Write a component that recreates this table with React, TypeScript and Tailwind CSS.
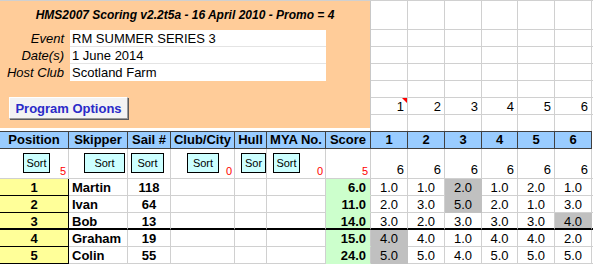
import { Fragment } from "react";

const cols =
  "grid grid-cols-[69px_59px_43px_64px_32px_59px_45px_37px_37px_37px_36px_37px_37px_1fr]";

const info = [
  ["Event", "RM SUMMER SERIES 3"],
  ["Date(s)", "1 June 2014"],
  ["Host Club", "Scotland Farm"],
];

const heads = ["Position", "Skipper", "Sail #", "Club/City", "Hull", "MYA No.", "Score", "1", "2", "3", "4", "5", "6"];

const sorts = [
  { ml: "ml-[23px]", w: "w-[27px]", label: "Sort", red: "5" },
  { ml: "ml-[15px]", w: "w-[41px]", label: "Sort", red: "" },
  { ml: "ml-[3px]", w: "w-[33px]", label: "Sort", red: "" },
  { ml: "ml-[16px]", w: "w-[32px]", label: "Sort", red: "0" },
  { ml: "ml-[6px]", w: "w-[25px]", label: "Sor", red: "" },
  { ml: "ml-[6px]", w: "w-[27px]", label: "Sort", red: "0" },
];

const results = [
  { pos: "1", name: "Martin", sail: "118", score: "6.0", r: ["1.0", "1.0", "2.0", "1.0", "2.0", "1.0"], d: 2 },
  { pos: "2", name: "Ivan", sail: "64", score: "11.0", r: ["2.0", "3.0", "5.0", "2.0", "1.0", "3.0"], d: 2 },
  { pos: "3", name: "Bob", sail: "13", score: "14.0", r: ["3.0", "2.0", "3.0", "3.0", "3.0", "4.0"], d: 5 },
  { pos: "4", name: "Graham", sail: "19", score: "15.0", r: ["4.0", "4.0", "1.0", "4.0", "4.0", "2.0"], d: 0 },
  { pos: "5", name: "Colin", sail: "55", score: "24.0", r: ["5.0", "5.0", "4.0", "5.0", "5.0", "5.0"], d: 0 },
];

function TopGrid() {
  const rows = [0, 1, 2, 3, 4, 5, 6];
  const cs = [0, 1, 2, 3, 4, 5, 6];
  return (
    <div className="flex-1 grid grid-cols-[37px_37px_37px_36px_37px_37px_1fr] grid-rows-[29px_17px_17px_17px_17px_17px_16px]">
      {rows.map((r) =>
        cs.map((c) => (
          <div
            key={`${r}-${c}`}
            className={`relative border-[#d0d0d0] ${c < 6 ? "border-r" : ""} ${r < 6 ? "border-b" : ""} ${
              r === 5 && c < 6 ? "text-right pr-[3px] text-[13px] leading-[17px]" : ""
            }`}
          >
            {r === 5 && c < 6 ? c + 1 : null}
            {r === 5 && c === 0 && (
              <span className="absolute top-0 right-0 w-0 h-0 border-t-[5px] border-t-[#ff0000] border-l-[5px] border-l-transparent" />
            )}
          </div>
        ))
      )}
    </div>
  );
}

export default function App() {
  return (
    <div className="w-[593px] h-[264px] overflow-hidden bg-white text-black font-['Liberation_Sans',Arial,sans-serif]">
      <div className="flex border-t border-[#d0d0d0]">
        <div className="w-[371px] h-[130px] border-r border-[#c8c8c8]">
          <div className="h-[127px] bg-[#ffcc99] flex flex-col">
            <div className="h-[29px] pt-[7px] text-center text-[12px] leading-[14px] font-bold italic">
              HMS2007 Scoring v2.2t5a - 16 April 2010 - Promo = 4
            </div>
            <div className="grid grid-cols-[70px_256px] text-[13px] leading-[17px]">
              {info.map(([k, v], i) => (
                <Fragment key={k}>
                  <div className="h-[17px] pr-[6px] text-right italic">{k}</div>
                  <div className={`h-[17px] bg-white pl-[2px] ${i < 2 ? "border-b border-[#e4e4e4]" : ""}`}>{v}</div>
                </Fragment>
              ))}
            </div>
            <div className="mt-[16px] ml-[9px] w-[119px] h-[22px] pt-[1px] bg-[#f3f3f3] border border-t-white border-l-white border-r-[#9a9a9a] border-b-[#9a9a9a] shadow-[1px_1px_0_#5a5a5a] text-center text-[13px] leading-[19px] font-bold text-[#2a2ac8]">
              Program Options
            </div>
          </div>
        </div>
        <TopGrid />
      </div>

      <div className={cols}>
        {heads.map((h) => (
          <div
            key={h}
            className="h-[18px] bg-[#99ccff] border-t border-b border-r border-[#404040] text-center text-[13px] leading-[16px] font-bold"
          >
            {h}
          </div>
        ))}
        <div className="h-[18px]" />
      </div>

      <div className={cols}>
        {sorts.map((s, i) => (
          <div key={i} className="h-[30px] flex border-r border-b border-[#d0d0d0]">
            <div
              className={`${s.ml} ${s.w} mt-[4px] h-[20px] bg-[#ccffff] border border-black text-center text-[11px] leading-[18px]`}
            >
              {s.label}
            </div>
            {s.red && (
              <div className="ml-auto self-end pr-[2px] text-[11px] leading-[13px] text-[#ff0000]">{s.red}</div>
            )}
          </div>
        ))}
        <div className="h-[30px] flex justify-end items-end pr-[2px] border-r border-b border-[#d0d0d0] text-[11px] leading-[13px] text-[#ff0000]">
          5
        </div>
        {[1, 2, 3, 4, 5, 6].map((n) => (
          <div
            key={n}
            className="h-[30px] flex justify-end items-end pr-[3px] border-r border-b border-[#d0d0d0] text-[13px] leading-[17px]"
          >
            6
          </div>
        ))}
        <div className="h-[30px] border-b border-[#d0d0d0]" />
      </div>

      {results.map((row, ri) => {
        const thick = ri === 2;
        const bottom = (normal: string) => (thick ? "border-b-2 border-b-black" : normal);
        return (
          <div key={row.pos} className={`${cols} text-[13px] leading-[17px]`}>
            <div className={`h-[17px] bg-[#ffff99] border-r border-r-black text-center font-bold ${bottom("border-b border-b-black")}`}>
              {row.pos}
            </div>
            <div className={`h-[17px] border-r border-r-[#d0d0d0] pl-[3px] font-bold ${bottom("border-b border-b-[#d0d0d0]")}`}>
              {row.name}
            </div>
            <div className={`h-[17px] border-r border-r-[#d0d0d0] text-center font-bold ${bottom("border-b border-b-[#d0d0d0]")}`}>
              {row.sail}
            </div>
            <div className={`h-[17px] border-r border-r-[#d0d0d0] ${bottom("border-b border-b-[#d0d0d0]")}`} />
            <div className={`h-[17px] border-r border-r-[#d0d0d0] ${bottom("border-b border-b-[#d0d0d0]")}`} />
            <div className={`h-[17px] border-r border-r-[#d0d0d0] ${bottom("border-b border-b-[#d0d0d0]")}`} />
            <div className={`h-[17px] bg-[#ccffcc] border-r border-r-[#c8c8c8] text-right pr-[4px] font-bold ${bottom("border-b border-b-[#ccffcc]")}`}>
              {row.score}
            </div>
            {row.r.map((v, i) => (
              <div
                key={i}
                className={`h-[17px] border-r text-center ${
                  i === row.d
                    ? `bg-[#c0c0c0] border-r-[#c0c0c0] ${bottom("border-b border-b-[#c0c0c0]")}`
                    : `border-r-[#d0d0d0] ${bottom("border-b border-b-[#d0d0d0]")}`
                }`}
              >
                {v}
              </div>
            ))}
            <div className={`h-[17px] ${bottom("border-b border-b-[#d0d0d0]")}`} />
          </div>
        );
      })}
    </div>
  );
}
